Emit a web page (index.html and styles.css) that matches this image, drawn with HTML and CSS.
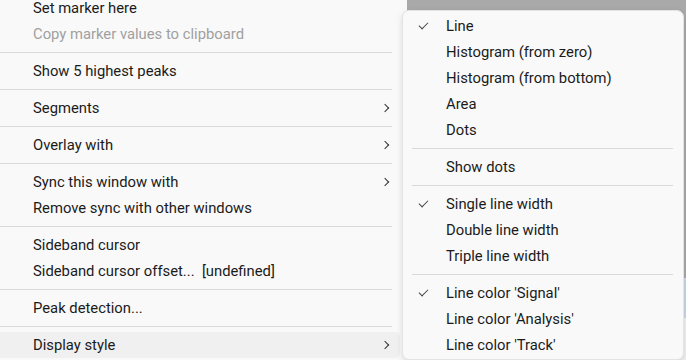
FILE: index.html
```html
<!DOCTYPE html>
<html lang="en">
<head>
    <meta charset="UTF-8">
    <title>Context menu</title>
    <link rel="stylesheet" href="styles.css">
</head>
<body>
    <!-- Menu principal -->
    <div class="menu">
        <div class="item">Set marker here</div>
        <div class="item disabled">Copy marker values to clipboard</div>
        <div class="sep"></div>
        <div class="item">Show 5 highest peaks</div>
        <div class="sep"></div>
        <div class="item sub">Segments <span class="arrow"></span></div>
        <div class="sep"></div>
        <div class="item sub">Overlay with <span class="arrow"></span></div>
        <div class="sep"></div>
        <div class="item sub">Sync this window with <span class="arrow"></span></div>
        <div class="item">Remove sync with other windows</div>
        <div class="sep"></div>
        <div class="item">Sideband cursor</div>
        <div class="item">Sideband cursor offset...&nbsp;&nbsp;[undefined]</div>
        <div class="sep"></div>
        <div class="item">Peak detection...</div>
        <div class="sep"></div>
        <div class="item sub hover">Display style <span class="arrow"></span></div>
    </div>

    <!-- Submenu Display style -->
    <div class="submenu">
        <div class="item checked">Line</div>
        <div class="item">Histogram (from zero)</div>
        <div class="item">Histogram (from bottom)</div>
        <div class="item">Area</div>
        <div class="item">Dots</div>
        <div class="sep"></div>
        <div class="item">Show dots</div>
        <div class="sep"></div>
        <div class="item checked">Single line width</div>
        <div class="item">Double line width</div>
        <div class="item">Triple line width</div>
        <div class="sep"></div>
        <div class="item checked">Line color 'Signal'</div>
        <div class="item">Line color 'Analysis'</div>
        <div class="item">Line color 'Track'</div>
    </div>
</body>
</html>
```

FILE: styles.css
```css
body {
    margin: 0;
    height: 360px;
    overflow: hidden;
    font-family: Roboto, "Open Sans", sans-serif;
    font-size: 14.8px;
    color: #1b1b1b;
    background: linear-gradient(to bottom, #a9a9a9 0 278px, #c8d8e9 278px 318px, #f0f0f0 318px);
}

.menu {
    width: 407px;
    height: 365px;
    margin-top: -5px;
    background: #f9f9f9;
}
.menu .item {
    height: 26px;
    line-height: 26px;
    padding-left: 33px;
    margin-right: 7px;
    display: flex;
    align-items: center;
    white-space: pre;
}
.menu .item.disabled {
    color: #a0a0a0;
}
.menu .item.hover {
    background: #f0f0f0;
    border-radius: 0 5px 5px 0;
}
.menu .sep {
    height: 1px;
    margin: 5px 15px 5px 0;
    background: #dadada;
}
.arrow {
    margin-left: auto;
    margin-right: 12px;
    width: 5px;
    height: 5px;
    border-top: 1.4px solid #333;
    border-right: 1.4px solid #333;
    transform: rotate(45deg);
}

.submenu {
    position: absolute;
    left: 402px;
    top: 10px;
    width: 280px;
    padding: 2px 0 1px;
    background: #f9f9f9;
    border: 1px solid #e3e3e3;
    border-radius: 7px;
    box-shadow: 0 2px 6px rgba(0, 0, 0, 0.12);
}
.submenu .item {
    height: 26px;
    line-height: 26px;
    padding-left: 43px;
    position: relative;
}
.submenu .item.checked::before {
    content: "";
    position: absolute;
    left: 16px;
    top: 9px;
    width: 8px;
    height: 4px;
    border-left: 1px solid #444;
    border-bottom: 1px solid #444;
    transform: rotate(-45deg);
}
.submenu .sep {
    height: 1px;
    margin: 5px 10px 5px 9px;
    background: #dadada;
}
```
